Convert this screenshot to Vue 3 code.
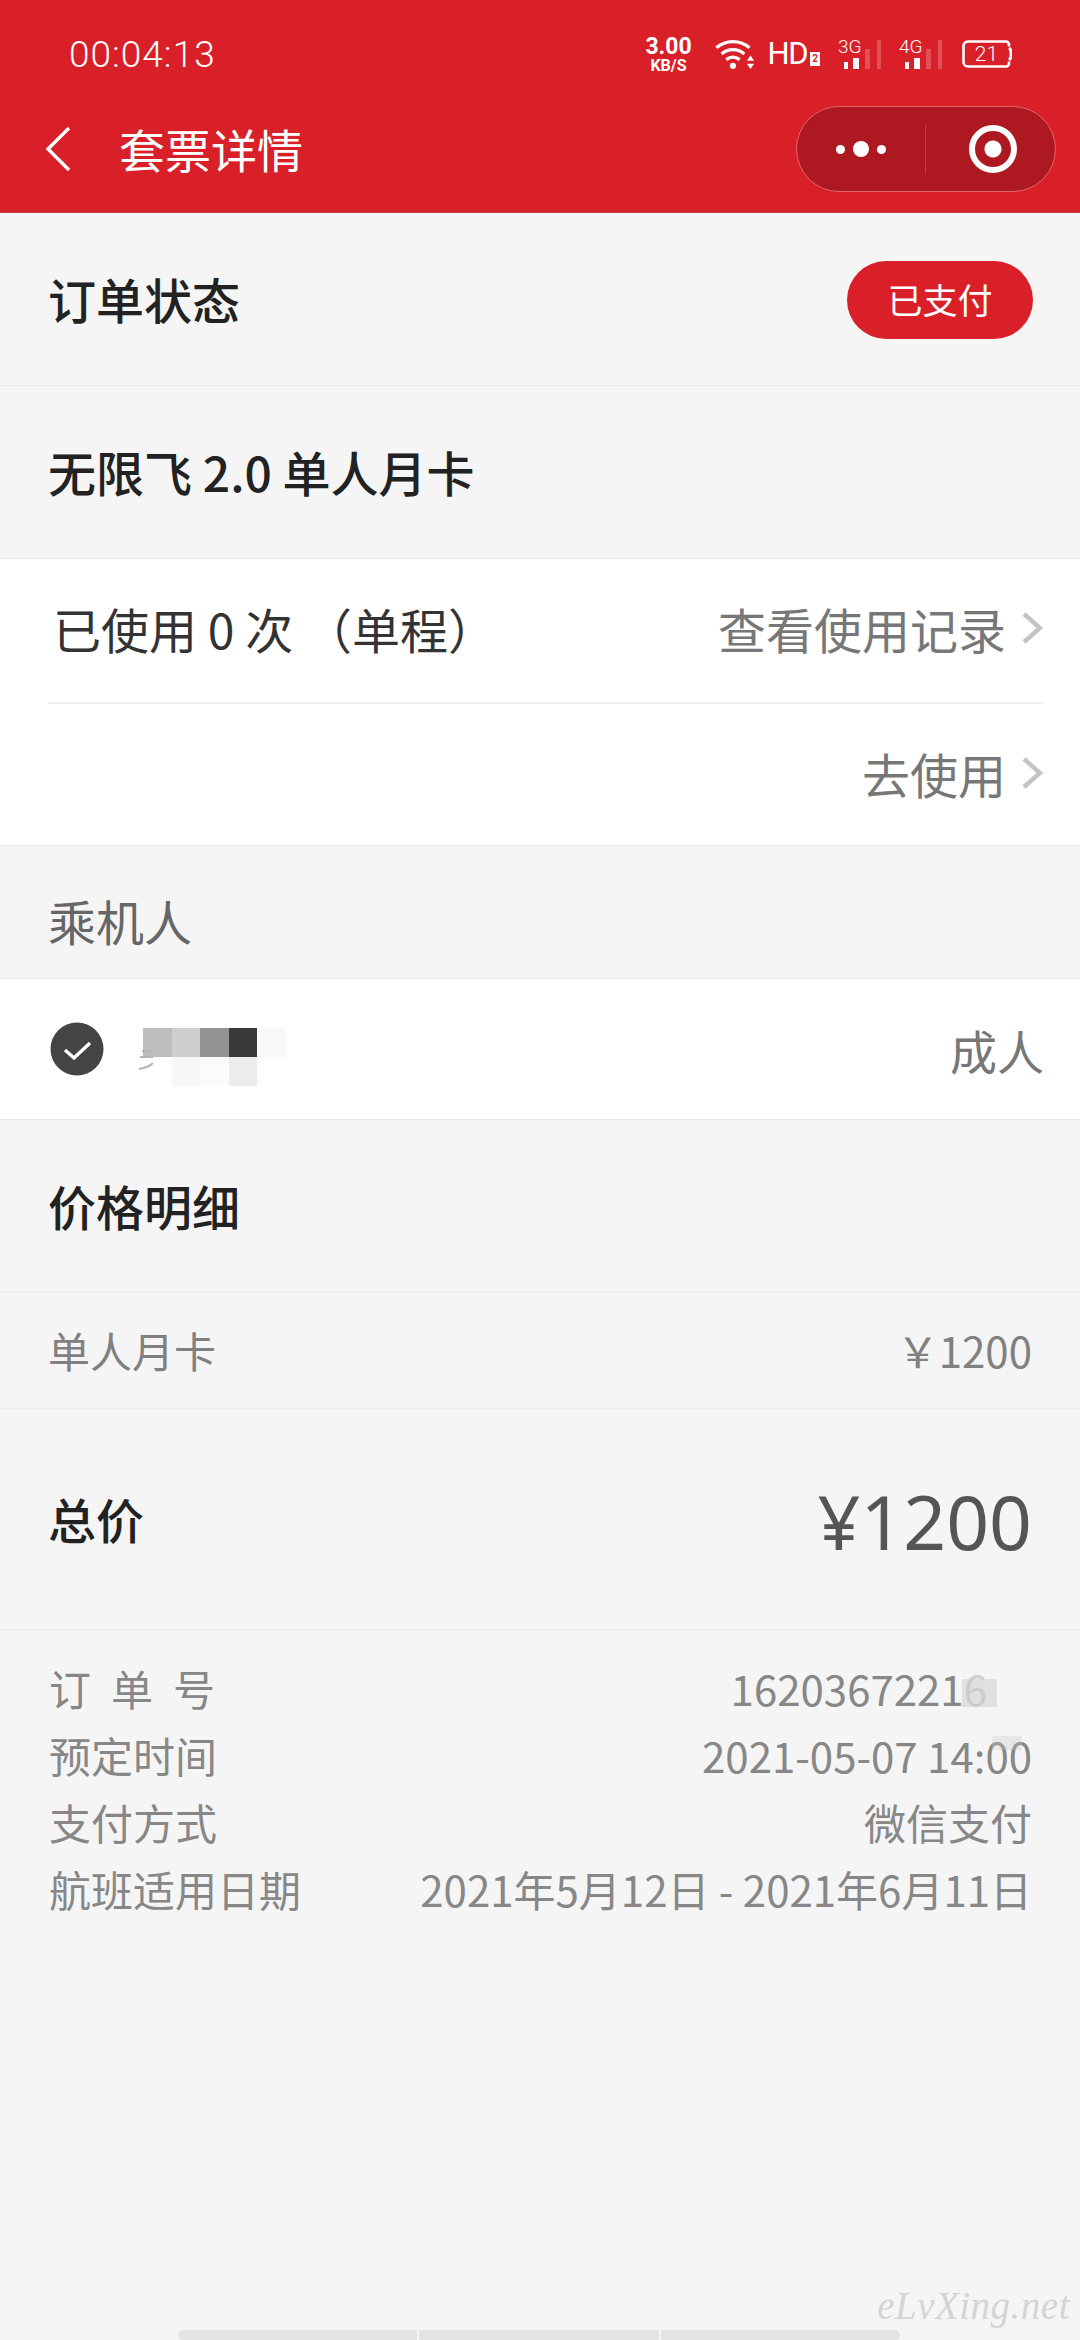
<template>
  <div class="page">
    <header class="topbar">
      <div class="status">
        <span class="clock">00:04:13</span>
        <div class="status-icons">
          <div class="speed"><b>3.00</b><small>KB/S</small></div>
          <svg class="wifi" width="40" height="31" viewBox="0 0 38 30" fill="none" stroke="#fff" stroke-width="3.2">
            <path d="M1 8.500C10 .500 24 .500 33 8.500" />
            <path d="M6 14.500C12 9 22 9 28 14.500" />
            <path d="M10.500 20C14.500 17 19.500 17 23.500 20" />
            <circle cx="17" cy="26" r="3" fill="#fff" stroke="none" />
            <path d="M34 16l-3.500 5h7zM34 29l-3.500-5h7z" fill="#fff" stroke="none" />
          </svg>
          <div class="hd">HD<i>2</i></div>
          <div v-for="g in ['3G', '4G']" :key="g" class="signal">
            <span class="gen">{{ g }}</span>
            <svg width="43" height="29" viewBox="0 0 43 29" fill="#fff">
              <rect x="6" y="22" width="4" height="7" />
              <rect x="15" y="18" width="6" height="11" />
              <rect x="27" y="9" width="5" height="20" opacity=".22" />
              <rect x="39" y="0" width="4" height="29" opacity=".22" />
            </svg>
          </div>
          <svg class="battery" width="50" height="28" viewBox="0 0 50 28" fill="none" stroke="#fff" stroke-width="2.600">
            <path d="M47 6.500V4.500a3 3 0 0 0-3-3H6a4.500 4.500 0 0 0-4.500 4.500v16a4.500 4.500 0 0 0 4.500 4.500h38a3 3 0 0 0 3-3v-2" />
            <path d="M47 8c3 2 3 10 0 12" stroke-width="3" />
            <text x="24.500" y="21" text-anchor="middle" fill="#fff" stroke="none" font-size="21" font-weight="300" font-family="Roboto, sans-serif">21</text>
          </svg>
        </div>
      </div>
      <div class="navbar">
        <svg class="back" width="28" height="46" viewBox="0 0 28 46" fill="none" stroke="#fff" stroke-width="3.400">
          <path d="M25 2L4 23l21 21" />
        </svg>
        <span class="nav-title">套票详情</span>
        <div class="capsule">
          <div class="capsule-more"><i></i><i class="big"></i><i></i></div>
          <div class="capsule-line"></div>
          <div class="capsule-close"><i></i></div>
        </div>
      </div>
    </header>

    <section class="row head-row">
      <span class="title">订单状态</span>
      <span class="paid">已支付</span>
    </section>
    <section class="row name-row">
      <span class="title">无限飞 2.0 单人月卡</span>
    </section>

    <section class="usage">
      <div class="usage-row divided">
        <span class="usage-text">已使用 0 次 （单程）</span>
        <span class="link">查看使用记录<svg class="arrow" width="22" height="34" viewBox="0 0 22 34" fill="none" stroke="#c4c4c4" stroke-width="4.500"><path d="M3 3l16 14L3 31" /></svg></span>
      </div>
      <div class="usage-row end">
        <span class="link">去使用<svg class="arrow" width="22" height="34" viewBox="0 0 22 34" fill="none" stroke="#c4c4c4" stroke-width="4.500"><path d="M3 3l16 14L3 31" /></svg></span>
      </div>
    </section>

    <div class="passenger-label">乘机人</div>
    <section class="passenger">
      <svg class="check" width="54" height="54" viewBox="0 0 54 54">
        <circle cx="27" cy="27" r="26.500" fill="#444" />
        <path d="M15 28l9 8 16-15" fill="none" stroke="#fff" stroke-width="3.400" />
      </svg>
      <div class="mosaic">
        <i v-for="(c, idx) in mosaic" :key="idx" :style="{ background: c }"></i>
        <svg class="smear" width="20" height="24" viewBox="0 0 20 24" fill="none" stroke="#b5b5b5" stroke-width="2">
          <path d="M4 3h11M2 9h13M1 21c6-1 11-3 14-6" />
        </svg>
      </div>
      <span class="kind">成人</span>
    </section>

    <section class="row price-head">
      <span class="title">价格明细</span>
    </section>
    <section class="row item-row">
      <span>单人月卡</span>
      <span>￥1200</span>
    </section>
    <section class="row total-row">
      <span class="title">总价</span>
      <span class="total">¥1200</span>
    </section>

    <section class="details">
      <div class="detail">
        <span class="spaced">订单号</span>
        <span class="order-no">1620367221<span class="blurred">6</span></span>
      </div>
      <div class="detail">
        <span>预定时间</span>
        <span class="booked">2021-05-07 14:00</span>
      </div>
      <div class="detail">
        <span>支付方式</span>
        <span>微信支付</span>
      </div>
      <div class="detail">
        <span>航班适用日期</span>
        <span>2021年5月12日 - 2021年6月11日</span>
      </div>
    </section>

    <div class="spacer"></div>
    <div class="homebar"><i></i><i></i><i></i></div>
    <span class="watermark">eLvXing.net</span>
  </div>
</template>

<script setup>
const mosaic = [
  '#bdbdbd', '#cfcfcf', '#939393', '#3a3a3a', '#f8f8f8',
  '#ffffff', '#f7f7f7', '#fbfbfb', '#ececec', '#ffffff'
]
</script>

<style>
html, body {
  margin: 0;
  background: #f5f5f5;
}
</style>

<style scoped>
.page {
  position: relative;
  display: flex;
  flex-direction: column;
  width: 1080px;
  height: 2340px;
  overflow: hidden;
  background: #f5f5f5;
  font-family: "Noto Sans CJK SC", "Noto Sans", sans-serif;
  color: #222;
}

.topbar {
  flex: none;
  height: 213px;
  background: #d91f27;
  border-bottom: 1px solid #b9464b;
  box-sizing: border-box;
  color: #fff;
}

.status {
  display: flex;
  justify-content: space-between;
  align-items: center;
  box-sizing: border-box;
  height: 96px;
  padding: 12px 68px 0 69px;
}

.clock {
  font-family: Roboto, sans-serif;
  font-size: 37px;
  letter-spacing: 1px;
  font-weight: 300;
}

.status-icons {
  display: flex;
  align-items: center;
}

.speed {
  display: flex;
  flex-direction: column;
  align-items: center;
  width: 48px;
  margin-right: 22px;
  font-family: Roboto, sans-serif;
  line-height: 1;
}

.speed b {
  font-size: 23px;
}

.speed small {
  font-size: 16px;
  font-weight: 700;
}

.wifi {
  margin-right: 13px;
}

.hd {
  display: flex;
  align-items: flex-end;
  margin-right: 18px;
  font-family: Roboto, sans-serif;
  font-size: 31px;
  font-weight: 400;
  letter-spacing: -1.500px;
  line-height: 24px;
}

.hd i {
  width: 10px;
  height: 14px;
  margin-left: 3px;
  background: #fff;
  color: #d91f27;
  font-size: 10px;
  font-style: normal;
  font-weight: 700;
  letter-spacing: 0;
  line-height: 14px;
  text-align: center;
}

.signal {
  position: relative;
  width: 43px;
  height: 29px;
  margin-right: 18px;
}

.signal svg {
  display: block;
}

.signal + .battery {
  margin-left: 2px;
}

.gen {
  position: absolute;
  left: 0;
  top: -3px;
  font-family: Roboto, sans-serif;
  font-size: 19px;
  font-weight: 300;
  line-height: 20px;
}

.navbar {
  display: flex;
  align-items: center;
  height: 106px;
  padding: 0 24px 0 44px;
}

.back {
  margin-right: 47px;
}

.nav-title {
  flex: 1;
  margin-bottom: 2px;
  font-size: 46px;
  line-height: 1;
}

.capsule {
  display: flex;
  align-items: center;
  box-sizing: border-box;
  width: 260px;
  height: 86px;
  background: #ae1820;
  border: 1.500px solid #e2656a;
  border-radius: 43px;
}

.capsule-more {
  display: flex;
  justify-content: center;
  align-items: center;
  gap: 8px;
  width: 128px;
}

.capsule-more i {
  width: 9px;
  height: 9px;
  border-radius: 50%;
  background: #fff;
}

.capsule-more i.big {
  width: 16px;
  height: 16px;
}

.capsule-line {
  width: 1px;
  height: 50px;
  background: #c2363c;
}

.capsule-close {
  display: flex;
  flex: 1;
  justify-content: center;
  padding-left: 4px;
}

.capsule-close i {
  box-sizing: border-box;
  width: 48px;
  height: 48px;
  border: 6px solid #fff;
  border-radius: 50%;
  background: radial-gradient(circle, #fff 0 8px, transparent 9px);
}

.row {
  flex: none;
  display: flex;
  justify-content: space-between;
  align-items: center;
  box-sizing: border-box;
  padding: 0 48px;
  border-bottom: 1px solid #ebebeb;
}

.title {
  margin-bottom: 2px;
  font-size: 48px;
  font-weight: 500;
  color: #222;
}

.head-row {
  height: 173px;
  padding-right: 47px;
}

.name-row {
  height: 172px;
  border-bottom: none;
}

.paid {
  width: 186px;
  height: 78px;
  margin-top: 1px;
  border-radius: 39px;
  background: #d91f27;
  color: #fff;
  font-size: 35px;
  line-height: 76px;
  text-align: center;
}

.usage {
  flex: none;
  background: #fff;
  border-top: 1px solid #ebebeb;
  border-bottom: 1px solid #ebebeb;
}

.usage-row {
  display: flex;
  justify-content: space-between;
  align-items: center;
  box-sizing: border-box;
  height: 141px;
  margin: 0 37px 0 48px;
  padding: 0 0 4px 5px;
}

.usage-row.divided {
  height: 145px;
  padding-bottom: 5px;
  border-bottom: 2px solid #efefef;
}

.usage-row.end {
  justify-content: flex-end;
}

.usage-text {
  font-size: 48px;
  color: #333;
}

.link {
  display: flex;
  align-items: center;
  font-size: 48px;
  color: #777;
}

.arrow {
  margin-left: 15px;
}

.passenger-label {
  flex: none;
  height: 132px;
  box-sizing: border-box;
  padding-left: 48px;
  font-size: 48px;
  line-height: 148px;
  color: #666;
}

.passenger {
  flex: none;
  display: flex;
  align-items: center;
  box-sizing: border-box;
  height: 142px;
  padding: 0 36px 0 50px;
  background: #fff;
  border-top: 1px solid #ebebeb;
  border-bottom: 1px solid #e6e6e6;
}

.mosaic {
  position: relative;
  display: grid;
  grid-template-columns: repeat(5, 28.600px);
  grid-auto-rows: 29px;
  margin: 16px 0 0 39px;
}

.mosaic i {
  display: block;
}

.smear {
  position: absolute;
  left: -5px;
  top: 20px;
}

.kind {
  margin-left: auto;
  font-size: 47px;
  color: #777;
}

.price-head {
  height: 173px;
}

.item-row {
  height: 116px;
  padding-bottom: 2px;
  font-size: 42px;
  color: #808080;
}

.total-row {
  height: 221px;
}

.total {
  margin-top: 5px;
  font-family: "Noto Sans", sans-serif;
  font-size: 75px;
  color: #555;
  line-height: 1;
}

.details {
  flex: none;
  padding: 24px 48px 0 49px;
  font-size: 42px;
  line-height: 67px;
  color: #878787;
}

.detail {
  display: flex;
  justify-content: space-between;
  height: 67px;
}

.spaced {
  letter-spacing: 20px;
}

.order-no {
  margin-right: 45px;
}

.blurred {
  position: relative;
  color: #cfcfcf;
}

.blurred::after {
  content: "";
  position: absolute;
  left: -2px;
  right: -10px;
  top: 22px;
  height: 28px;
  background: rgba(200, 200, 200, .45);
}

.booked {
  position: relative;
}

.booked::after {
  content: "";
  position: absolute;
  right: 10px;
  top: 15px;
  width: 30px;
  height: 14px;
  background: rgba(200, 200, 200, .3);
}

.spacer {
  flex: 1;
}

.homebar {
  flex: none;
  display: flex;
  gap: 2px;
  width: 722px;
  height: 10px;
  margin-left: 178px;
}

.homebar i {
  flex: 1;
  background: #e3e3e3;
}

.homebar i:first-child {
  border-radius: 5px 0 0 5px;
}

.homebar i:last-child {
  border-radius: 0 5px 5px 0;
}

.watermark {
  position: absolute;
  right: 10px;
  bottom: 12px;
  font-family: "Liberation Serif", serif;
  font-style: italic;
  font-size: 39px;
  letter-spacing: .5px;
  color: #d4d4d4;
}
</style>
